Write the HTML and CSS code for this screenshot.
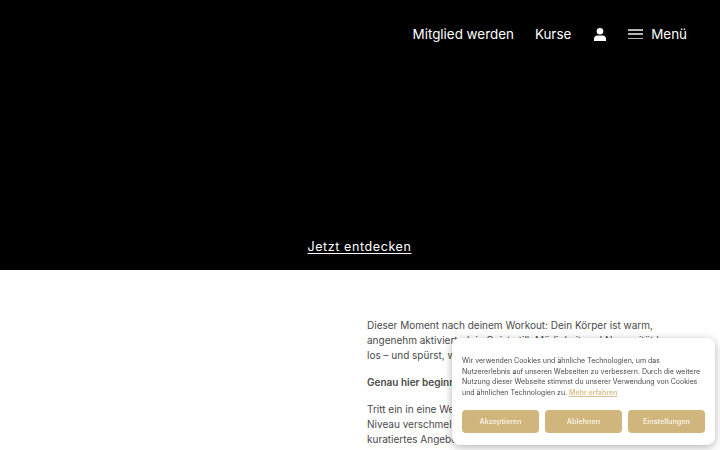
FILE: index.html
```html
<!DOCTYPE html>
<html lang="de">
<head>
  <meta charset="UTF-8">
  <title>Mitglied werden</title>
  <link rel="stylesheet" href="styles.css">
</head>
<body>

  <!-- Hero -->
  <section class="hero">
    <nav class="nav">
      <a href="#">Mitglied werden</a>
      <a href="#">Kurse</a>
      <a href="#" class="nav-user" aria-label="Konto">
        <svg width="12" height="13" viewBox="0 0 12 13" fill="#ffffff">
          <circle cx="6" cy="3.3" r="3.3"/>
          <path d="M0 13V10.6C0 8.8 1.4 7.4 3.2 7.4H8.8C10.6 7.4 12 8.8 12 10.6V13Z"/>
        </svg>
      </a>
      <a href="#" class="nav-menu">
        <span class="burger"><i></i><i></i><i></i></span>
        Menü
      </a>
    </nav>
    <a href="#" class="hero-link">Jetzt entdecken</a>
  </section>

  <!-- Intro text -->
  <section class="intro">
    <div class="intro-text">
      <p>Dieser Moment nach deinem Workout: Dein Körper ist warm, angenehm aktiviert, dein Geist still. Müdigkeit und Nervosität lassen los – und spürst, wie du ganz bei dir ankommst.</p>
      <p><strong>Genau hier beginnt dein Moment der Ruhe.</strong></p>
      <p>Tritt ein in eine Welt, in der Training und Erholung auf höchstem Niveau verschmelzen. Entdecke unser vielfältiges, sorgfältig kuratiertes Angebot für dich.</p>
    </div>
  </section>

  <!-- Cookie Banner -->
  <div class="cookie-card">
    <p>Wir verwenden Cookies und ähnliche Technologien, um das Nutzererlebnis auf unseren Webseiten zu verbessern. Durch die weitere Nutzung dieser Webseite stimmst du unserer Verwendung von Cookies und ähnlichen Technologien zu. <a href="#">Mehr erfahren</a></p>
    <div class="cookie-actions">
      <button type="button">Akzeptieren</button>
      <button type="button">Ablehnen</button>
      <button type="button">Einstellungen</button>
    </div>
  </div>

</body>
</html>
```

FILE: styles.css
```css
* {
  box-sizing: border-box;
  margin: 0;
  padding: 0;
}

html,
body {
  height: 100%;
  overflow: hidden;
}

body {
  font-family: Inter, 'Liberation Sans', sans-serif;
  background: #ffffff;
  color: #4a4a4a;
}

a {
  color: inherit;
  text-decoration: none;
}

.hero {
  background: #000000;
  color: #ffffff;
  height: 270px;
  display: flex;
  flex-direction: column;
  align-items: center;
  justify-content: space-between;
  padding: 24px 33px 14px 0;
}

.nav {
  align-self: flex-end;
  display: flex;
  align-items: center;
  font-size: 13.4px;
  line-height: 20px;
  gap: 21px;
}

.nav-user {
  display: flex;
  margin: 0 1px 0 2px;
}

.nav-menu {
  display: flex;
  align-items: center;
  gap: 8px;
}

.burger {
  display: flex;
  flex-direction: column;
  gap: 2.75px;
  width: 15px;
}

.burger i {
  display: block;
  height: 1.5px;
  background: #b4b4b4;
}

.hero-link {
  font-size: 12.5px;
  line-height: 18px;
  letter-spacing: 0.6px;
  text-decoration: underline;
  text-underline-offset: 2px;
  transform: translateX(16px);
}

.intro {
  padding: 48px 30px 0 367px;
}

.intro-text p {
  font-size: 10px;
  line-height: 15px;
  margin-bottom: 12px;
}

.intro-text strong {
  font-weight: 600;
}

.cookie-card {
  position: fixed;
  left: 452px;
  top: 338px;
  width: 263px;
  height: 107px;
  background: #ffffff;
  border-radius: 8px;
  box-shadow: 0 2px 8px rgba(0, 0, 0, 0.3);
  padding: 18px 10px 0;
}

.cookie-card p {
  font-size: 7px;
  line-height: 10.5px;
  color: #4a4a4a;
  margin-bottom: 12px;
}

.cookie-card p a {
  color: #d9c08c;
  font-weight: 600;
  text-decoration: underline;
}

.cookie-actions {
  display: flex;
  gap: 6px;
}

.cookie-actions button {
  flex: 1;
  height: 22.5px;
  border: none;
  border-radius: 4px;
  background: #d0b67c;
  color: #f7f0e0;
  font-family: inherit;
  font-size: 7.2px;
  font-weight: 600;
  cursor: pointer;
}
```
